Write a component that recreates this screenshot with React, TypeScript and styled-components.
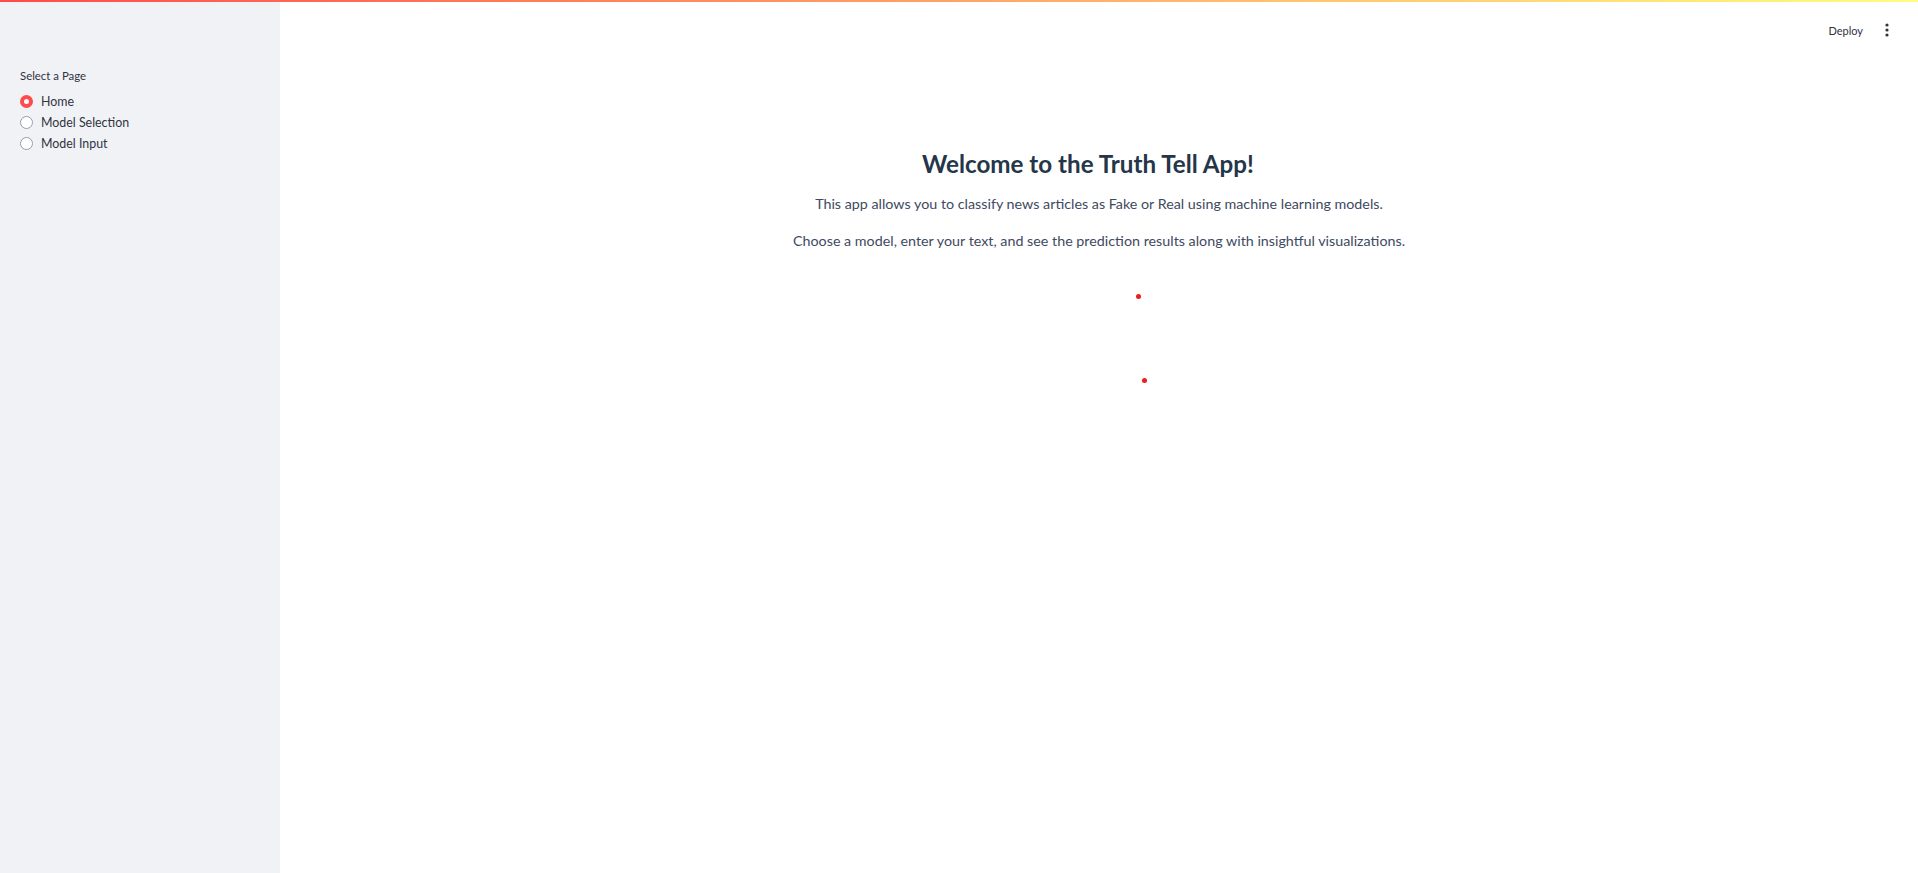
import React from "react";
import styled, { createGlobalStyle } from "styled-components";

const GlobalStyle = createGlobalStyle`
  html, body { margin: 0; padding: 0; height: 100%; background: #ffffff; }
  body { font-family: "Lato", "Noto Sans", "Liberation Sans", sans-serif; color: rgb(49, 51, 63); }
  #root { height: 100%; }
  * { box-sizing: border-box; }
`;

const Page = styled.div`
  position: relative;
  display: flex;
  width: 100%;
  height: 873px;
  overflow: hidden;
`;

const Decoration = styled.div`
  position: absolute;
  top: 0;
  left: 0;
  right: 0;
  height: 2px;
  background: linear-gradient(90deg, rgb(255, 75, 75), rgb(255, 253, 128));
  z-index: 10;
`;

const Sidebar = styled.aside`
  width: 280px;
  flex: 0 0 280px;
  background: rgb(240, 242, 246);
  padding: 66px 20px 0 20px;
  display: flex;
  flex-direction: column;
`;

const GroupLabel = styled.div`
  font-size: 11.4px;
  line-height: 20px;
  color: rgb(49, 51, 63);
  margin-bottom: 5px;
`;

const RadioList = styled.div`
  display: flex;
  flex-direction: column;
`;

const RadioRow = styled.label`
  display: flex;
  align-items: center;
  gap: 8px;
  height: 21px;
  font-size: 12.4px;
  color: rgb(49, 51, 63);
  cursor: pointer;
`;

const RadioDot = styled.span<{ $checked?: boolean }>`
  width: 13px;
  height: 13px;
  border-radius: 50%;
  flex: 0 0 13px;
  background: #ffffff;
  border: ${(p) => (p.$checked ? "4px solid rgb(255, 75, 75)" : "1px solid rgb(151, 156, 168)")};
`;

const Main = styled.main`
  position: relative;
  flex: 1;
  display: flex;
  flex-direction: column;
`;

const Header = styled.header`
  height: 60px;
  display: flex;
  align-items: center;
  justify-content: flex-end;
  gap: 17px;
  padding-right: 24px;
`;

const DeployButton = styled.button`
  border: none;
  background: transparent;
  font-family: inherit;
  font-size: 11px;
  color: rgb(49, 51, 63);
  padding: 0;
  cursor: pointer;
`;

const MenuButton = styled.button`
  border: none;
  background: transparent;
  width: 14px;
  height: 20px;
  padding: 0;
  display: flex;
  align-items: center;
  justify-content: center;
  cursor: pointer;
`;

const Block = styled.div`
  display: flex;
  flex-direction: column;
  align-items: center;
  padding-top: 84px;
`;

const Title = styled.h2`
  margin: 0;
  font-size: 24.2px;
  font-weight: 700;
  line-height: 40px;
  color: #253649;
  text-align: center;
  padding-right: 22px;
`;

const Paragraph = styled.p<{ $gap?: number }>`
  margin: ${(p) => p.$gap ?? 0}px 0 0 0;
  font-size: 14.3px;
  line-height: 24px;
  color: #3e4a5f;
  text-align: center;
`;

const Canvas = styled.div`
  position: relative;
  width: 100%;
  flex: 1;
`;

const Dot = styled.span<{ $x: number; $y: number }>`
  position: absolute;
  left: ${(p) => p.$x}px;
  top: ${(p) => p.$y}px;
  width: 5px;
  height: 5px;
  border-radius: 50%;
  background: #ee1c1c;
`;

export default function App() {
  const pages = ["Home", "Model Selection", "Model Input"];
  return (
    <>
      <GlobalStyle />
      <Page>
        <Decoration />
        <Sidebar>
          <GroupLabel>Select a Page</GroupLabel>
          <RadioList>
            {pages.map((p, i) => (
              <RadioRow key={p}>
                <RadioDot $checked={i === 0} />
                {p}
              </RadioRow>
            ))}
          </RadioList>
        </Sidebar>
        <Main>
          <Header>
            <DeployButton>Deploy</DeployButton>
            <MenuButton aria-label="menu">
              <svg width="4" height="14" viewBox="0 0 4 14">
                <circle cx="2" cy="2" r="1.6" fill="rgb(49,51,63)" />
                <circle cx="2" cy="7" r="1.6" fill="rgb(49,51,63)" />
                <circle cx="2" cy="12" r="1.6" fill="rgb(49,51,63)" />
              </svg>
            </MenuButton>
          </Header>
          <Block>
            <Title>Welcome to the Truth Tell App!</Title>
            <Paragraph $gap={8}>
              This app allows you to classify news articles as Fake or Real using machine learning models.
            </Paragraph>
            <Paragraph $gap={13}>
              Choose a model, enter your text, and see the prediction results along with insightful visualizations.
            </Paragraph>
          </Block>
          <Canvas>
            <Dot $x={856} $y={41} />
            <Dot $x={862} $y={125} />
          </Canvas>
        </Main>
      </Page>
    </>
  );
}
